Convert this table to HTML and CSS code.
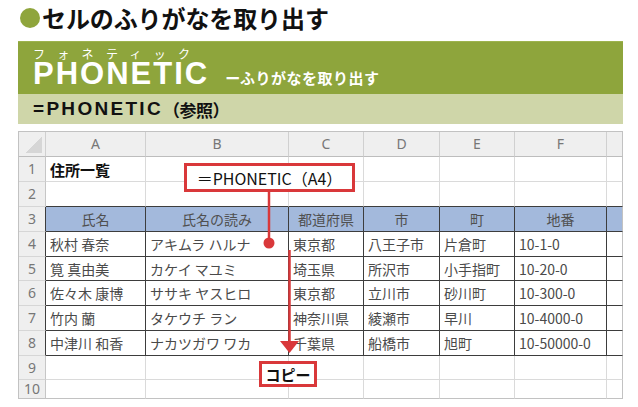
FILE: index.html
```html
<!DOCTYPE html>
<html lang="ja">
<head>
<meta charset="utf-8">
<title>PHONETIC</title>
<link rel="stylesheet" href="styles.css">
</head>
<body>
<div class="page">
  <div class="title"><span class="dot"></span><h1>セルのふりがなを取り出す</h1></div>
  <div class="band">
    <div class="kana">フォネティック</div>
    <div class="fn-row"><span class="fn">PHONETIC</span><span class="fn-sub">ーふりがなを取り出す</span></div>
  </div>
  <div class="syntax"><span class="syn-latin">=PHONETIC</span><span class="syn-jp">（参照）</span></div>
  <div class="sheet-wrap">
    <table class="sheet">
      <colgroup>
        <col class="c-num"><col class="c-a"><col class="c-b"><col class="c-c"><col class="c-d"><col class="c-e"><col class="c-f"><col class="c-g">
      </colgroup>
      <tr class="hdr">
        <th class="corner"><span class="tri"></span></th><th>A</th><th>B</th><th>C</th><th>D</th><th>E</th><th>F</th><th class="last"></th>
      </tr>
      <tr class="r1">
        <td class="num">1</td><td class="bold">住所一覧</td><td></td><td></td><td></td><td></td><td></td><td class="last"></td>
      </tr>
      <tr class="r2 above">
        <td class="num">2</td><td></td><td></td><td></td><td></td><td></td><td></td><td class="last"></td>
      </tr>
      <tr class="r3 rng head">
        <td class="num">3</td><td>氏名</td><td>氏名の読み</td><td>都道府県</td><td>市</td><td>町</td><td>地番</td><td class="last"></td>
      </tr>
      <tr class="r4 rng">
        <td class="num">4</td><td>秋村 春奈</td><td>アキムラ ハルナ</td><td>東京都</td><td>八王子市</td><td>片倉町</td><td>10-1-0</td><td class="last"></td>
      </tr>
      <tr class="r5 rng">
        <td class="num">5</td><td>筧 真由美</td><td>カケイ マユミ</td><td>埼玉県</td><td>所沢市</td><td>小手指町</td><td>10-20-0</td><td class="last"></td>
      </tr>
      <tr class="r6 rng">
        <td class="num">6</td><td>佐々木 康博</td><td>ササキ ヤスヒロ</td><td>東京都</td><td>立川市</td><td>砂川町</td><td>10-300-0</td><td class="last"></td>
      </tr>
      <tr class="r7 rng">
        <td class="num">7</td><td>竹内 蘭</td><td>タケウチ ラン</td><td>神奈川県</td><td>綾瀬市</td><td>早川</td><td>10-4000-0</td><td class="last"></td>
      </tr>
      <tr class="r8 rng">
        <td class="num">8</td><td>中津川 和香</td><td>ナカツガワ ワカ</td><td>千葉県</td><td>船橋市</td><td>旭町</td><td>10-50000-0</td><td class="last"></td>
      </tr>
      <tr class="r9">
        <td class="num">9</td><td></td><td></td><td></td><td></td><td></td><td></td><td class="last"></td>
      </tr>
      <tr class="r10">
        <td class="num">10</td><td></td><td></td><td></td><td></td><td></td><td></td><td class="last"></td>
      </tr>
    </table>
    <svg class="overlay" width="605" height="276" viewBox="0 0 605 276">
      <line x1="251" y1="61" x2="251" y2="112" stroke="#d9383a" stroke-width="2.5"/>
      <circle cx="251" cy="112" r="5.5" fill="#d9383a"/>
      <line x1="271.5" y1="119" x2="271.5" y2="212" stroke="#d9383a" stroke-width="2.5"/>
      <polygon points="262,210 281,210 271.5,222" fill="#d9383a"/>
    </svg>
    <div class="callout formula">＝PHONETIC（A4）</div>
    <div class="callout copy">コピー</div>
  </div>
</div>
</body>
</html>
```
FILE: styles.css
```css
html, body {
  margin: 0;
  padding: 0;
  background: #ffffff;
}

.page {
  width: 638px;
  height: 407px;
  overflow: hidden;
  font-family: "Noto Sans CJK JP", "Noto Sans", sans-serif;
}

/* title */
.title {
  height: 36px;
  margin-bottom: 5px;
  padding-left: 20px;
  display: flex;
  align-items: center;
  gap: 2px;
}
.dot {
  width: 20px;
  height: 20px;
  border-radius: 50%;
  background: #8fa53c;
}
.title h1 {
  margin: 0;
  font-size: 24px;
  line-height: 28px;
  font-weight: 700;
  color: #111;
  letter-spacing: -0.1px;
}

/* green band */
.band {
  margin-left: 18px;
  width: 605px;
  height: 53px;
  box-sizing: border-box;
  background: #8ea53c;
  border-top: 1px solid #9db34e;
  padding: 5px 0 0 15px;
}
.kana {
  font-size: 12px;
  line-height: 14px;
  color: #ffffff;
  letter-spacing: 12.3px;
}
.fn-row {
  display: flex;
  align-items: baseline;
  gap: 16px;
  height: 26px;
}
.fn {
  font-family: "Liberation Sans", Arial, sans-serif;
  font-weight: 700;
  font-size: 31px;
  line-height: 25px;
  letter-spacing: 2px;
  color: #ffffff;
}
.fn-sub {
  font-size: 15px;
  line-height: 18px;
  font-weight: 700;
  color: #ffffff;
  letter-spacing: 0.5px;
}

/* syntax band */
.syntax {
  margin-left: 18px;
  width: 605px;
  height: 30px;
  box-sizing: border-box;
  background: #cfd6a9;
  padding-left: 15px;
  display: flex;
  align-items: center;
  color: #111;
  font-weight: 700;
}
.syn-latin {
  font-family: "Liberation Sans", Arial, sans-serif;
  font-size: 19px;
  letter-spacing: 2.3px;
}
.syn-jp {
  font-size: 17px;
  letter-spacing: -0.5px;
}

/* sheet */
.sheet-wrap {
  position: relative;
  margin: 7px 0 0 18px;
  width: 605px;
}
.sheet {
  table-layout: fixed;
  width: 605px;
  border-collapse: separate;
  border-spacing: 0;
  border-top: 1px solid #c2c2c2;
  border-left: 1px solid #c2c2c2;
  font-size: 14px;
  color: #4a4a4a;
}
.c-num { width: 27px; }
.c-a { width: 100px; }
.c-b { width: 143px; }
.c-c { width: 75px; }
.c-d { width: 76px; }
.c-e { width: 75px; }
.c-f { width: 92px; }
.c-g { width: 16px; }

.sheet th,
.sheet td {
  box-sizing: border-box;
  padding: 0 0 0 4px;
  border-right: 1px solid #dadada;
  border-bottom: 1px solid #dadada;
  white-space: nowrap;
  overflow: hidden;
  text-align: left;
  vertical-align: middle;
  line-height: 18px;
  font-weight: 400;
}
.sheet tr { height: 25px; }
.sheet tr.r5 { height: 24px; }
.sheet tr.r9 { height: 24px; }
.sheet tr.r10 { height: 19px; }

.sheet th {
  background: #efefef;
  color: #777;
  font-family: "Noto Sans", "Liberation Sans", sans-serif;
  font-size: 14px;
  text-align: center;
  padding: 0;
  border-right: 1px solid #d0d0d0;
  border-bottom: 1px solid #bdbdbd;
}
.sheet th.corner {
  position: relative;
}
.tri {
  position: absolute;
  right: 3px;
  bottom: 3px;
  width: 17px;
  height: 17px;
  background: linear-gradient(to bottom right, transparent 50%, #d6d6d6 50%);
}
.sheet td.num {
  background: #efefef;
  color: #777;
  font-family: "Noto Sans", "Liberation Sans", sans-serif;
  text-align: center;
  padding: 0;
  border-right: 1px solid #c6c6c6;
  border-bottom: 1px solid #d6d6d6;
}
.sheet td.last,
.sheet th.last {
  border-right: 1px solid #c2c2c2;
}
.sheet td.bold {
  font-weight: 700;
  color: #111;
  font-size: 15px;
  padding-top: 2px;
}

/* table range borders */
.sheet tr.above td:not(.num) {
  border-bottom: 1px solid #3d3d3d;
}
.sheet tr.rng td {
  border-bottom: 1px solid #3d3d3d;
}
.sheet tr.rng td:not(.last) {
  border-right: 1px solid #3d3d3d;
}
.sheet tr.rng td.num {
  border-bottom: 1px solid #d6d6d6;
}
.sheet tr.head td:not(.num) {
  background: #a3b9dc;
  text-align: center;
  padding: 0;
  color: #505050;
}
.sheet tr.r10 td {
  border-bottom: 1px solid #c2c2c2;
}

/* callouts */
.overlay {
  position: absolute;
  left: 0;
  top: 0;
  pointer-events: none;
}
.callout {
  position: absolute;
  box-sizing: border-box;
  background: #ffffff;
  border: 3px solid #d9383a;
  color: #111;
  display: flex;
  align-items: center;
  justify-content: center;
}
.formula {
  left: 166px;
  top: 32px;
  width: 171px;
  height: 29px;
  font-size: 16px;
  letter-spacing: 0;
}
.copy {
  left: 241px;
  top: 230px;
  width: 58px;
  height: 26px;
  font-size: 15px;
  font-weight: 700;
}
```
